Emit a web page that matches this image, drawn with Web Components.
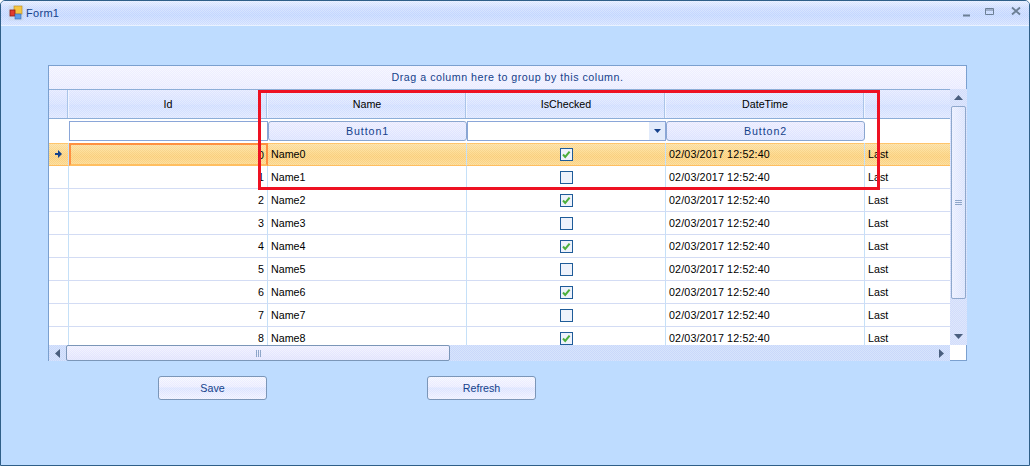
<!DOCTYPE html>
<html>
<head>
<meta charset="utf-8">
<title>Form1</title>
<style>
  html, body { margin: 0; padding: 0; height: 100%; }
  body {
    overflow: hidden;
    font: 10.7px "Liberation Sans", sans-serif;
    --dither: repeating-conic-gradient(rgba(255,255,255,.2) 0 25%, rgba(165,140,255,.07) 0 50%) 0 0 / 2px 2px;
  }
</style>
</head>
<body>
<win-frame caption="Form1">
  <data-grid></data-grid>
  <form-actions>
    <ribbon-button>Save</ribbon-button>
    <ribbon-button>Refresh</ribbon-button>
  </form-actions>
  <red-marker></red-marker>
</win-frame>

<script>
// Window chrome with title bar, form content goes in the slot
class WinFrame extends HTMLElement {
  constructor() {
    super();
    this.attachShadow({ mode: "open" });
  }

  connectedCallback() {
    const caption = this.getAttribute("caption") || "";
    this.shadowRoot.innerHTML = `
      <style>
        :host {
          display: flex;
          flex-direction: column;
          position: relative;
          box-sizing: border-box;
          width: 1030px;
          height: 466px;
          border: 1px solid #2f5f88;
          border-radius: 5px 5px 0 0;
          background: #bedcff;
          overflow: hidden;
        }
        .title {
          display: flex;
          align-items: center;
          flex: none;
          height: 24px;
          padding: 0 4px 0 7px;
          border-bottom: 1px solid #e9f2ff;
          background: var(--dither), linear-gradient(#e6f0ff, #cfe0ff 30%, #c6dbff 60%, #d6e5ff);
          color: #15428b;
          font-size: 11px;
          letter-spacing: .3px;
        }
        .title svg { flex: none; }
        .caption { margin-left: 2px; flex: 1; }
        .controls { display: flex; }
        .body {
          flex: 1;
          padding: 39px 0 0 47px;
          min-height: 0;
        }
      </style>
      <div class="title">
        <svg width="16" height="16" viewBox="0 0 16 16">
          <rect x="0.5" y="0.5" width="15" height="15" fill="#c9d6e6" opacity=".5"/>
          <rect x="6" y="1" width="8" height="8" fill="#f4c542" stroke="#b98a1e" stroke-width=".6"/>
          <rect x="2" y="5" width="5" height="6" fill="#e23b2e" stroke="#8c1c14" stroke-width=".8"/>
          <rect x="7" y="9" width="6" height="5" fill="#5f9de8" stroke="#3a6cb0" stroke-width=".6"/>
        </svg>
        <span class="caption">${caption}</span>
        <div class="controls">
          <svg width="62" height="16" viewBox="0 0 62 16" fill="none" stroke="#6c7f95">
            <path d="M0 10.5h7" stroke-width="2"/>
            <path d="M22.5 3.5h8v6h-8z M22 5h9" stroke-width="1"/>
            <path d="M49 2.5l8 7M57 2.5l-8 7" stroke-width="1.8"/>
          </svg>
        </div>
      </div>
      <div class="body"><slot></slot></div>
    `;
  }
}

// Small 13px grid checkbox
class GridCheck extends HTMLElement {
  constructor() {
    super();
    this.attachShadow({ mode: "open" });
  }

  connectedCallback() {
    const mark = this.hasAttribute("checked")
      ? `<path d="M3 6.5l2.2 2.4L9.6 3.6" fill="none" stroke="#4caf3c" stroke-width="2"/>`
      : "";
    this.shadowRoot.innerHTML = `
      <style>
        :host { display: block; width: 13px; height: 13px; }
        svg { display: block; }
      </style>
      <svg width="13" height="13" viewBox="0 0 13 13">
        <rect x="0.5" y="0.5" width="12" height="12" fill="#eef2fb" stroke="#1f5c99"/>
        ${mark}
      </svg>
    `;
  }
}

// Office style button, used on the form and inside the filter row
class RibbonButton extends HTMLElement {
  constructor() {
    super();
    this.attachShadow({ mode: "open" });
  }

  connectedCallback() {
    this.shadowRoot.innerHTML = `
      <style>
        :host {
          display: flex;
          align-items: center;
          justify-content: center;
          box-sizing: border-box;
          width: 109px;
          height: 24px;
          border: 1px solid #7b96b8;
          border-radius: 3px;
          color: #15428b;
          background: var(--dither), linear-gradient(#f6f8ff, #eef0ff 45%, #dfe8ff 50%, #f2f4ff);
        }
        :host([flat]) {
          width: 100%;
          height: 20px;
          border-color: #8aa6d0;
          letter-spacing: .9px;
          background: var(--dither), linear-gradient(#eef0ff, #e0e8ff);
        }
      </style>
      <slot></slot>
    `;
  }
}

// The Save / Refresh row under the grid
class FormActions extends HTMLElement {
  constructor() {
    super();
    this.attachShadow({ mode: "open" });
  }

  connectedCallback() {
    this.shadowRoot.innerHTML = `
      <style>
        :host {
          display: flex;
          gap: 160px;
          padding: 15px 0 0 110px;
        }
      </style>
      <slot></slot>
    `;
  }
}

// Red rectangle someone drew on the screenshot, lies over the grid
class RedMarker extends HTMLElement {
  constructor() {
    super();
    this.attachShadow({ mode: "open" });
  }

  connectedCallback() {
    this.shadowRoot.innerHTML = `
      <style>
        :host {
          position: absolute;
          left: 257px;
          top: 89px;
          box-sizing: border-box;
          width: 622px;
          height: 100px;
          border: 3px solid #ee1122;
          pointer-events: none;
        }
      </style>
    `;
  }
}

class DataGrid extends HTMLElement {
  constructor() {
    super();
    this.attachShadow({ mode: "open" });
  }

  connectedCallback() {
    this.render();
  }

  rowHtml(i) {
    const checked = i % 2 === 0 ? "checked" : "";
    const current = i === 0 ? "current" : "";
    const arrow = i === 0
      ? `<svg width="7" height="8" viewBox="0 0 7 8"><path d="M0 3h3V0l4 4-4 4V5H0z" fill="#15428b"/></svg>`
      : "";
    return `
      <div class="row ${current}">
        <div class="cell ind">${arrow}</div>
        <div class="cell num ${i === 0 ? "focus" : ""}">${i}</div>
        <div class="cell">Name${i}</div>
        <div class="cell mid"><grid-check ${checked}></grid-check></div>
        <div class="cell date">02/03/2017 12:52:40</div>
        <div class="cell">Last</div>
      </div>`;
  }

  render() {
    let rows = "";
    for (let i = 0; i < 9; i++) rows += this.rowHtml(i);

    this.shadowRoot.innerHTML = `
      <style>
        :host {
          display: flex;
          flex-direction: column;
          box-sizing: border-box;
          width: 919px;
          height: 296px;
          border-top: 1px solid #7ba0cf;
          border-left: 1px solid #7ba0cf;
          color: #000;
        }
        .group {
          flex: none;
          height: 23px;
          line-height: 23px;
          text-align: center;
          letter-spacing: .5px;
          color: #15428b;
          border-right: 1px solid #7ba0cf;
          background: var(--dither), linear-gradient(#f6f7ff, #eef0ff);
        }
        .main { display: flex; flex: none; height: 256px; }
        .view {
          width: 901px;
          overflow: hidden;
          background: #fff;
        }
        .head, .filter, .row {
          display: grid;
          grid-template-columns: 20px repeat(5, 199px);
        }
        .head {
          height: 30px;
          box-sizing: border-box;
          border-top: 1px solid #8daed8;
          border-bottom: 1px solid #8daed8;
        }
        .head > div {
          display: flex;
          align-items: center;
          justify-content: center;
          border-right: 1px solid #f0f5ff;
          box-shadow: inset -1px 0 0 #a9c4e8;
          background: var(--dither), linear-gradient(#e6edff, #dae6ff 50%, #d3e2ff 55%, #e1eaff);
          white-space: nowrap;
          overflow: hidden;
        }
        .filter { height: 24px; align-items: start; }
        .filter > div { margin-top: 2px; }
        .box {
          box-sizing: border-box;
          height: 20px;
          border: 1px solid #8aa6d8;
          background: #fff;
        }
        .combo { display: flex; justify-content: flex-end; }
        .combo span {
          display: flex;
          align-items: center;
          justify-content: center;
          width: 16px;
          background: #e2ebfb;
        }
        .row { height: 23px; }
        .cell {
          display: flex;
          align-items: center;
          box-sizing: border-box;
          padding: 0 3px;
          border-right: 1px solid #c5e0f8;
          border-bottom: 1px solid #d3dcf4;
          white-space: nowrap;
          overflow: hidden;
        }
        .date { letter-spacing: .15px; }
        .ind { justify-content: center; padding: 0; }
        .num { justify-content: flex-end; }
        .mid { justify-content: center; }
        .row.current {
          background: var(--dither), linear-gradient(#ffe3a0, #ffd880 40%, #ffd274 60%, #ffdc8c);
          box-shadow: inset 0 1px 0 #ffc56c;
        }
        .row.current .cell { border-bottom-color: #ffbe60; }
        .cell.focus { border: 2px solid #ff9040; padding-right: 2px; }
        .vbar {
          display: flex;
          flex-direction: column;
          align-items: center;
          box-sizing: border-box;
          width: 17px;
          background: var(--dither), #d6e2fb;
        }
        .arrow { flex: none; display: flex; align-items: center; justify-content: center; }
        .vbar .arrow { height: 17px; width: 100%; }
        .vthumb {
          flex: none;
          box-sizing: border-box;
          width: 15px;
          height: 193px;
          border: 1px solid #8fa8cc;
          border-radius: 2px;
          display: flex;
          align-items: center;
          justify-content: center;
          background: var(--dither), linear-gradient(90deg, #eef3ff, #dde7fc);
        }
        .vspace { flex: 1; }
        .hrow { display: flex; flex: none; height: 16px; }
        .hbar {
          display: flex;
          align-items: center;
          width: 901px;
          background: var(--dither), #cddefb;
        }
        .hbar .arrow { width: 17px; height: 100%; }
        .hthumb {
          flex: none;
          box-sizing: border-box;
          width: 384px;
          height: 16px;
          border: 1px solid #7b96b8;
          border-radius: 2px;
          display: flex;
          align-items: center;
          justify-content: center;
          background: var(--dither), linear-gradient(#f2f3ff, #e4e8fd);
        }
        .hspace { flex: 1; }
        .corner {
          flex: 1;
          background: #fff;
          border-right: 1px solid #7ba0cf;
          border-bottom: 1px solid #7ba0cf;
        }
      </style>

      <div class="group">Drag a column here to group by this column.</div>
      <div class="main">
        <div class="view">
          <div class="head">
            <div></div><div>Id</div><div>Name</div><div>IsChecked</div><div>DateTime</div><div>Last</div>
          </div>
          <div class="filter">
            <div></div>
            <div class="box"></div>
            <div><ribbon-button flat>Button1</ribbon-button></div>
            <div class="box combo"><span>
              <svg width="7" height="4" viewBox="0 0 7 4"><path d="M0 0h7L3.5 4z" fill="#15428b"/></svg>
            </span></div>
            <div><ribbon-button flat>Button2</ribbon-button></div>
            <div></div>
          </div>
          ${rows}
        </div>
        <div class="vbar">
          <div class="arrow"><svg width="9" height="5" viewBox="0 0 9 5"><path d="M0 5h9L4.5 0z" fill="#4a5f7e"/></svg></div>
          <div class="vthumb"><svg width="7" height="5" viewBox="0 0 7 5"><path d="M0 .5h7M0 2.5h7M0 4.5h7" stroke="#8ea6c8"/></svg></div>
          <div class="vspace"></div>
          <div class="arrow"><svg width="9" height="5" viewBox="0 0 9 5"><path d="M0 0h9L4.5 5z" fill="#4a5f7e"/></svg></div>
        </div>
      </div>
      <div class="hrow">
        <div class="hbar">
          <div class="arrow"><svg width="5" height="9" viewBox="0 0 5 9"><path d="M5 0v9L0 4.5z" fill="#4a5f7e"/></svg></div>
          <div class="hthumb"><svg width="5" height="7" viewBox="0 0 5 7"><path d="M.5 0v7M2.5 0v7M4.5 0v7" stroke="#8ea6c8"/></svg></div>
          <div class="hspace"></div>
          <div class="arrow"><svg width="5" height="9" viewBox="0 0 5 9"><path d="M0 0v9L5 4.5z" fill="#4a5f7e"/></svg></div>
        </div>
        <div class="corner"></div>
      </div>
    `;
  }
}

customElements.define("win-frame", WinFrame);
customElements.define("grid-check", GridCheck);
customElements.define("ribbon-button", RibbonButton);
customElements.define("form-actions", FormActions);
customElements.define("red-marker", RedMarker);
customElements.define("data-grid", DataGrid);
</script>
</body>
</html>
